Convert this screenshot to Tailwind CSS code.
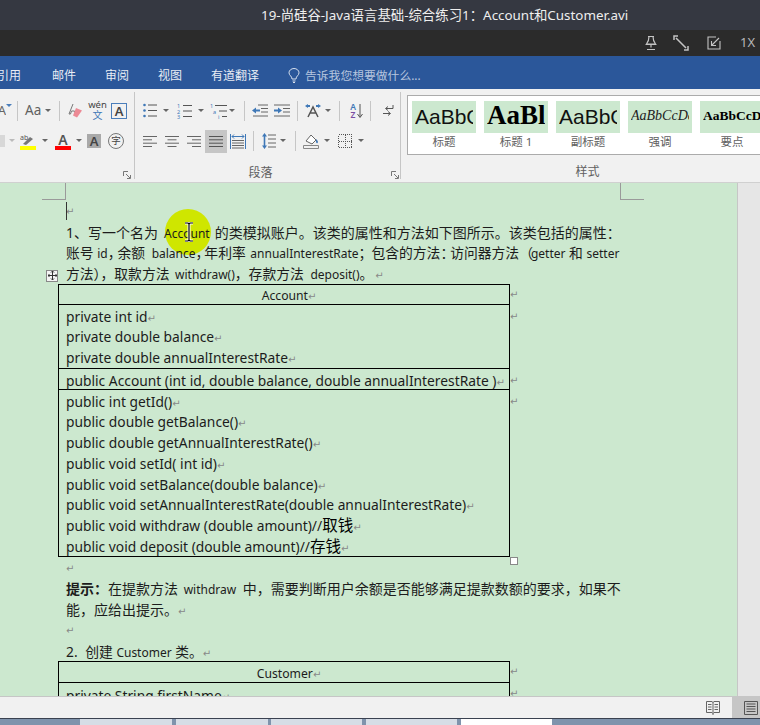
<!DOCTYPE html>
<html lang="zh-CN">
<head>
    <meta charset="UTF-8">
    <title>19-尚硅谷-Java语言基础-综合练习1：Account和Customer.avi</title>
    <script src="https://cdn.jsdelivr.net/npm/@tailwindcss/browser@4"></script>
</head>
<body class="bg-[#cce8cf]">
<div class="w-[760px] h-[725px] overflow-hidden flex flex-col font-['Noto_Sans','Noto_Sans_CJK_SC',sans-serif]">

    <!-- Player title -->
    <div class="h-[30px] shrink-0 bg-[#353841] text-[#eeeeee] text-[13.4px] leading-[30px] pl-[261px] whitespace-nowrap">19-尚硅谷-Java语言基础-综合练习1：Account和Customer.avi</div>

    <!-- Player toolbar -->
    <div class="h-[26px] shrink-0 bg-[#2b2b2b] flex items-center text-[#b8b8b8]">
        <svg class="ml-[644px] w-[14px] h-[16px]" viewBox="0 0 14 16" fill="none" stroke="#c4c4c4" stroke-width="1.2"><path d="M4 1.500h6M5 1.500c0 3-.5 5-2.500 7.500h9C9.500 6.500 9 4.500 9 1.500M1.500 9.500h11M7 9.500v3M3 14.500h8"/></svg>
        <svg class="ml-[15px] w-[16px] h-[16px]" viewBox="0 0 16 16" fill="none" stroke="#c4c4c4" stroke-width="1.500"><path d="M3 3l10 10M1 5V1h4M15 11v4h-4"/></svg>
        <svg class="ml-[18px] w-[14px] h-[14px]" viewBox="0 0 14 14" fill="none" stroke="#c4c4c4" stroke-width="1.100"><path d="M9 1H1v12h12V5M12 2L4.500 9.500M4.500 5v4.500H9"/></svg>
        <span class="ml-[19px] text-[13px]">1X</span>
    </div>

    <!-- Word tabs -->
    <div class="h-[33px] shrink-0 bg-[#2b579a] flex items-center pt-[6px] text-[12px] text-[#e8edf5] whitespace-nowrap">
        <span class="ml-[-3px] w-[25px]">引用</span>
        <span class="ml-[30px] w-[24px]">邮件</span>
        <span class="ml-[29px] w-[24px]">审阅</span>
        <span class="ml-[29px] w-[24px]">视图</span>
        <span class="ml-[29px] w-[48px]">有道翻译</span>
        <svg class="ml-[29px] w-[12px] h-[15px]" viewBox="0 0 12 15" fill="none" stroke="#d7e0ee" stroke-width="1"><path d="M4 11C4 8 1 7.500 1 4.800a5 4.300 0 0 1 10 0C11 7.500 8 8 8 11zM4.500 13h3M5 14.500h2"/></svg>
        <span class="ml-[5px] text-[#b6c6df] text-[11.800px]">告诉我您想要做什么...</span>
    </div>

    <!-- Ribbon -->
    <div class="h-[94px] shrink-0 bg-[#f1f1f1] flex border-b border-[#d0d0d0] text-[#606060]">

        <!-- Font group -->
        <div class="relative w-[135px] shrink-0 border-r border-[#c6c6c6] my-[3px]">
            <div class="h-[32px] flex items-center pt-[5px]">
                <span class="w-[6px] flex justify-end overflow-hidden text-[13px] text-[#666] leading-none">A</span>
                <svg class="w-[6px] h-[4px] mb-[10px]" viewBox="0 0 6 4"><path d="M0 0h6L3 3z" fill="#4a7ebb"/></svg>
                <span class="w-px h-[20px] bg-[#c6c6c6] ml-[5px]"></span>
                <span class="ml-[7px] w-[16px] text-[13.500px] leading-none">Aa</span>
                <svg class="ml-[4px] w-[6px] h-[4px]" viewBox="0 0 6 4"><path d="M0 0h6L3 3z" fill="#666"/></svg>
                <span class="w-px h-[20px] bg-[#c6c6c6] ml-[8px]"></span>
                <svg class="ml-[8px] w-[16px] h-[16px]" viewBox="0 0 16 16"><path d="M5 1L1 11h1.500l1-3h3l1 3" fill="none" stroke="#777"/><path d="M8 5l6 2.500-5 7-4-2z" fill="#ec8a95"/></svg>
                <div class="ml-[5px] w-[17px] flex flex-col items-center leading-none">
                    <span class="text-[9.500px] leading-[10px] text-[#444]">wén</span>
                    <span class="text-[10px] leading-[11px] text-[#3f78b7]">文</span>
                </div>
                <span class="ml-[5px] w-[16px] h-[16px] border border-[#4a7ebb] text-[13px] leading-[14px] text-center text-[#444] font-semibold">A</span>
            </div>
            <div class="h-[32px] flex items-center pt-[2px]">
                <span class="w-[5px] h-[12px] bg-[#d8d8d8]"></span>
                <svg class="ml-[4px] w-[6px] h-[4px]" viewBox="0 0 6 4"><path d="M0 0h6L3 3z" fill="#bbb"/></svg>
                <svg class="ml-[5px] w-[17px] h-[17px]" viewBox="0 0 17 17"><path d="M3 11L10 4l3 2-7 6" fill="#777"/><text x="0" y="7" font-size="7" fill="#555" font-family="Noto Sans">ab</text><rect y="13" width="16" height="4" fill="#ffff00"/></svg>
                <svg class="ml-[5px] w-[6px] h-[4px]" viewBox="0 0 6 4"><path d="M0 0h6L3 3z" fill="#666"/></svg>
                <div class="ml-[7px] w-[16px] h-[17px] flex flex-col items-center">
                    <span class="text-[14px] leading-[13px] text-[#555] font-semibold">A</span>
                    <span class="w-[16px] h-[4px] bg-[#ff0000]"></span>
                </div>
                <svg class="ml-[5px] w-[6px] h-[4px]" viewBox="0 0 6 4"><path d="M0 0h6L3 3z" fill="#666"/></svg>
                <span class="ml-[5px] w-[14px] h-[14px] bg-[#a9a9a9] text-[13px] leading-[14px] text-center text-[#444] font-semibold">A</span>
                <span class="ml-[7px] w-[16px] h-[16px] rounded-full border border-[#777] text-[9.500px] leading-[14px] text-center text-[#444]">字</span>
            </div>
            <svg class="absolute left-[123px] top-[79px] w-[8px] h-[8px]" viewBox="0 0 8 8" fill="none" stroke="#777"><path d="M.5 5V.5H5M3 3l4 4M7.500 4v3.500H4"/></svg>
        </div>

        <!-- Paragraph group -->
        <div class="relative w-[266px] shrink-0 border-r border-[#c6c6c6] my-[3px] pl-[8px]">
            <div class="h-[32px] flex items-center pt-[5px]">
                <svg class="w-[14px] h-[15px]" viewBox="0 0 14 15"><circle cx="1.500" cy="2" r="1.300" fill="#3f78b7"/><circle cx="1.500" cy="7.500" r="1.300" fill="#3f78b7"/><circle cx="1.500" cy="13" r="1.300" fill="#3f78b7"/><path d="M5 2h9M5 7.500h9M5 13h9" stroke="#555"/></svg>
                <svg class="ml-[6px] w-[6px] h-[4px]" viewBox="0 0 6 4"><path d="M0 0h6L3 3z" fill="#666"/></svg>
                <svg class="ml-[8px] w-[15px] h-[16px]" viewBox="0 0 15 16"><text x="0" y="5" font-size="5.500" fill="#3f78b7" font-family="Noto Sans">1</text><text x="0" y="10.500" font-size="5.500" fill="#3f78b7" font-family="Noto Sans">2</text><text x="0" y="16" font-size="5.500" fill="#3f78b7" font-family="Noto Sans">3</text><path d="M6 2.500h9M6 8h9M6 13.500h9" stroke="#555"/></svg>
                <svg class="ml-[6px] w-[6px] h-[4px]" viewBox="0 0 6 4"><path d="M0 0h6L3 3z" fill="#666"/></svg>
                <svg class="ml-[6px] w-[17px] h-[16px]" viewBox="0 0 17 16"><text x="0" y="5" font-size="5.500" fill="#3f78b7" font-family="Noto Sans">1</text><text x="3" y="10.500" font-size="5.500" fill="#3f78b7" font-family="Noto Sans">a</text><text x="8" y="16" font-size="5.500" fill="#3f78b7" font-family="Noto Sans">i</text><path d="M5 2.500h12M9 8h8M12 13.500h5" stroke="#555"/></svg>
                <svg class="ml-[2px] w-[6px] h-[4px]" viewBox="0 0 6 4"><path d="M0 0h6L3 3z" fill="#666"/></svg>
                <span class="w-px h-[20px] bg-[#c6c6c6] ml-[9px]"></span>
                <svg class="ml-[7px] w-[16px] h-[13px]" viewBox="0 0 16 13"><path d="M6 1h10M9 4.500h7M9 8h7M1 12h15" stroke="#666"/><path d="M0 6.500l4-3v2h4v2H4v2z" fill="#3f78b7"/></svg>
                <svg class="ml-[6px] w-[16px] h-[13px]" viewBox="0 0 16 13"><path d="M0 1h16M9 4.500h7M9 8h7M0 12h16" stroke="#666"/><path d="M8 6.500l-4-3v2H0v2h4v2z" fill="#3f78b7"/></svg>
                <span class="w-px h-[20px] bg-[#c6c6c6] ml-[7px]"></span>
                <svg class="ml-[7px] w-[16px] h-[15px]" viewBox="0 0 16 15"><path d="M3 14L8 4l5 10M5 10h6" fill="none" stroke="#555" stroke-width="1.500"/><path d="M0 3l3-2v1h2v2H3v1zM16 3l-3-2v1h-2v2h2v1z" fill="#3f78b7"/></svg>
                <svg class="ml-[4px] w-[6px] h-[4px]" viewBox="0 0 6 4"><path d="M0 0h6L3 3z" fill="#666"/></svg>
                <span class="w-px h-[20px] bg-[#c6c6c6] ml-[8px]"></span>
                <div class="ml-[9px] w-[8px] flex flex-col text-[8.500px] leading-[8px] font-semibold items-center"><span class="text-[#3f78b7]">A</span><span class="text-[#7a4ea3]">Z</span></div>
                <svg class="w-[6px] h-[16px]" viewBox="0 0 6 16" fill="none" stroke="#555"><path d="M3 1v13M.5 11L3 14.500 5.500 11"/></svg>
                <span class="w-px h-[20px] bg-[#c6c6c6] ml-[7px]"></span>
                <svg class="ml-[11px] w-[12px] h-[14px]" viewBox="0 0 12 14" fill="none" stroke="#555"><path d="M11 1v3.500H4M6 2.500L3.500 4.500 6 6.500M1 9.500h7M6 7.500l2.500 2L6 11.500"/></svg>
            </div>
            <div class="h-[32px] flex items-center pt-[2px]">
                <svg class="w-[14px] h-[11px]" viewBox="0 0 14 11" stroke="#666"><path d="M0 .5h14M0 3.800h9M0 7.200h14M0 10.500h9"/></svg>
                <svg class="ml-[8px] w-[14px] h-[11px]" viewBox="0 0 14 11" stroke="#666"><path d="M0 .5h14M2.500 3.800h9M0 7.200h14M2.500 10.500h9"/></svg>
                <svg class="ml-[8px] w-[14px] h-[11px]" viewBox="0 0 14 11" stroke="#666"><path d="M0 .5h14M5 3.800h9M0 7.200h14M5 10.500h9"/></svg>
                <div class="ml-[4px] w-[22px] h-[23px] bg-[#c6c6c6] flex items-center justify-center">
                    <svg class="w-[14px] h-[11px]" viewBox="0 0 14 11" stroke="#555"><path d="M0 .5h14M0 3.800h14M0 7.200h14M0 10.500h14"/></svg>
                </div>
                <svg class="ml-[3px] w-[16px] h-[15px]" viewBox="0 0 16 15"><path d="M2 6.500h12M2 9h12M2 11.500h12M2 14h12" stroke="#666"/><path d="M.5 0v15M15.500 0v15" stroke="#3f78b7"/><path d="M2 2.500h12M2 2.500l2-2M2 2.500l2 2M14 2.500l-2-2M14 2.500l-2 2" stroke="#3f78b7" fill="none"/></svg>
                <span class="w-px h-[20px] bg-[#c6c6c6] ml-[7px]"></span>
                <svg class="ml-[8px] w-[14px] h-[16px]" viewBox="0 0 14 16"><path d="M6 2h8M6 6h8M6 10h8M6 14h8" stroke="#666"/><path d="M2.500 0L5 3.500H3.300v9H5L2.500 16 0 12.500h1.700v-9H0z" fill="#3f78b7"/></svg>
                <svg class="ml-[4px] w-[6px] h-[4px]" viewBox="0 0 6 4"><path d="M0 0h6L3 3z" fill="#666"/></svg>
                <span class="w-px h-[20px] bg-[#c6c6c6] ml-[9px]"></span>
                <svg class="ml-[7px] w-[16px] h-[16px]" viewBox="0 0 16 16" fill="none"><path d="M3 8l5-6 5 5-4 4z" fill="#fff" stroke="#666"/><path d="M13 6c2 2 2.500 3 1.500 4s-2-1-1.500-4z" fill="#3f78b7"/><path d="M.5 12.500h15v3H.5z" stroke="#888"/></svg>
                <svg class="ml-[5px] w-[6px] h-[4px]" viewBox="0 0 6 4"><path d="M0 0h6L3 3z" fill="#666"/></svg>
                <svg class="ml-[8px] w-[14px] h-[14px]" viewBox="0 0 14 14" fill="none" stroke="#555" stroke-dasharray="1 1" shape-rendering="crispEdges"><path d="M.5.500h13v13H.5zM7 .5v13M.5 7h13"/></svg>
                <svg class="ml-[6px] w-[6px] h-[4px]" viewBox="0 0 6 4"><path d="M0 0h6L3 3z" fill="#666"/></svg>
            </div>
            <div class="text-center text-[12px] leading-[16px] mt-[9px] pr-[22px]">段落</div>
            <svg class="absolute left-[256px] top-[79px] w-[8px] h-[8px]" viewBox="0 0 8 8" fill="none" stroke="#777"><path d="M.5 5V.5H5M3 3l4 4M7.500 4v3.500H4"/></svg>
        </div>

        <!-- Styles group -->
        <div class="flex-1 min-w-0 overflow-hidden pl-[6px] pt-[6px]">
            <div class="w-[400px] h-[60px] bg-white border border-[#ababab] flex gap-[8px] pl-[4px] pt-[5px]">
                <div class="w-[64px] shrink-0">
                    <div class="h-[32px] bg-[#cce8cf] px-[3px]"><div class="overflow-hidden whitespace-nowrap text-[#111] text-[21px] leading-[31px] font-['Liberation_Sans']">AaBbC</div></div>
                    <div class="text-center text-[11.500px] leading-[17px]">标题</div>
                </div>
                <div class="w-[64px] shrink-0">
                    <div class="h-[32px] bg-[#cce8cf] px-[3px]"><div class="overflow-hidden whitespace-nowrap text-black text-[27px] leading-[29px] font-bold font-['Liberation_Serif']">AaBl</div></div>
                    <div class="text-center text-[11.500px] leading-[17px]">标题 1</div>
                </div>
                <div class="w-[64px] shrink-0">
                    <div class="h-[32px] bg-[#cce8cf] px-[3px]"><div class="overflow-hidden whitespace-nowrap text-[#111] text-[21px] leading-[31px] font-['Liberation_Sans']">AaBbC</div></div>
                    <div class="text-center text-[11.500px] leading-[17px]">副标题</div>
                </div>
                <div class="w-[64px] shrink-0">
                    <div class="h-[32px] bg-[#cce8cf] px-[3px]"><div class="overflow-hidden whitespace-nowrap text-[#222] text-[14px] leading-[30px] italic font-['Liberation_Serif']">AaBbCcDd</div></div>
                    <div class="text-center text-[11.500px] leading-[17px]">强调</div>
                </div>
                <div class="w-[64px] shrink-0">
                    <div class="h-[32px] bg-[#cce8cf] pl-[3px]"><div class="overflow-hidden whitespace-nowrap text-black text-[13.500px] leading-[30px] font-bold font-['Liberation_Serif']">AaBbCcDd</div></div>
                    <div class="text-center text-[11.500px] leading-[17px]">要点</div>
                </div>
            </div>
            <div class="text-center text-[12px] leading-[16px] mt-[9px] pl-[8px]">样式</div>
        </div>
    </div>

    <!-- Document -->
    <div class="relative h-[513px] shrink-0 overflow-hidden bg-[#cce8cf] border-r-[22px] border-[#e6e6e6]">
        <!-- page corner marks -->
        <div class="absolute left-[42px] top-0 w-[24px] h-[17px] border-r border-b border-[#9a9a9a]"></div>
        <div class="absolute left-[620px] top-0 w-[24px] h-[17px] border-l border-b border-[#9a9a9a]"></div>
        <div class="absolute left-[737px] w-px top-0 bottom-0 bg-[#c6c6c6]"></div>
        <!-- cursor highlight -->
        <div class="absolute left-[165px] top-[26px] w-[46px] h-[46px] rounded-full bg-[#cfe600]"></div>

        <div class="relative pl-[66px] pt-[18px] w-[738px] text-[#1c1c1c] text-[12px] leading-[22.500px] whitespace-nowrap [&>div]:h-[20.700px]">
            <div class="relative leading-[20.700px]">
                <span class="absolute left-0 top-[1px] w-px h-[18px] bg-[#333]"></span>
                <span class="text-[#888] text-[10px] leading-none font-['DejaVu_Sans']">↵</span>
            </div>
            <div class="text-[14px]">1、写一个名为<span class="ml-[6px] text-[12px]">Account</span><span class="ml-[5px]">的类模拟账户。该类的属性和方法如下图所示。该类包括的属性：</span></div>
            <div class="text-[13.800px]">账号 <span class="text-[12px]">id</span><span class="mr-[-4px]">，</span>余额 <span class="ml-[3px] text-[12px]">balance</span><span class="mr-[-5px]">，</span>年利率 <span class="ml-[1px] text-[12px]">annualInterestRate</span><span class="mr-[-1px]">；</span>包含的方法<span class="mr-[-4px]">：</span>访问器方法<span class="mr-[-2px]">（</span><span class="text-[12px]">getter</span> 和 <span class="text-[12px]">setter</span></div>
            <div class="text-[13.800px]">方法），取款方法 <span class="ml-[2px] text-[12px]">withdraw()</span>，存款方法 <span class="ml-[3px] text-[12px]">deposit()</span>。<span class="ml-[2px] text-[#888] text-[10px] leading-none font-['DejaVu_Sans']">↵</span></div>

            <!-- Account table -->
            <div class="relative -ml-[8px] !h-[273px] w-[452px] border border-black text-[13.800px] leading-[20.700px]">
                <div class="h-[20px] leading-[21px] text-center text-[12.200px] pl-[10px] border-b border-black">Account<span class="text-[#888] text-[10px] leading-none font-['DejaVu_Sans']">↵</span></div>
                <div class="h-[64px] pl-[7px] pt-[2px] border-b border-black [&>div]:h-[20.700px]">
                    <div>private int id<span class="text-[#888] text-[10px] leading-none font-['DejaVu_Sans']">↵</span></div>
                    <div>private double balance<span class="text-[#888] text-[10px] leading-none font-['DejaVu_Sans']">↵</span></div>
                    <div>private double annualInterestRate<span class="text-[#888] text-[10px] leading-none font-['DejaVu_Sans']">↵</span></div>
                </div>
                <div class="h-[21px] leading-[23px] pl-[7px] border-b border-black">public Account (int id, double balance, double annualInterestRate )<span class="text-[#888] text-[10px] leading-none font-['DejaVu_Sans']">↵</span></div>
                <div class="h-[166px] pl-[7px] pt-[2px] [&>div]:h-[20.700px]">
                    <div>public int getId()<span class="text-[#888] text-[10px] leading-none font-['DejaVu_Sans']">↵</span></div>
                    <div>public double getBalance()<span class="text-[#888] text-[10px] leading-none font-['DejaVu_Sans']">↵</span></div>
                    <div>public double getAnnualInterestRate()<span class="text-[#888] text-[10px] leading-none font-['DejaVu_Sans']">↵</span></div>
                    <div>public void setId( int id)<span class="text-[#888] text-[10px] leading-none font-['DejaVu_Sans']">↵</span></div>
                    <div>public void setBalance(double balance)<span class="text-[#888] text-[10px] leading-none font-['DejaVu_Sans']">↵</span></div>
                    <div>public void setAnnualInterestRate(double annualInterestRate)<span class="text-[#888] text-[10px] leading-none font-['DejaVu_Sans']">↵</span></div>
                    <div>public void withdraw (double amount)//<span class="text-[15.500px] text-black leading-none">取钱</span><span class="text-[#888] text-[10px] leading-none font-['DejaVu_Sans']">↵</span></div>
                    <div>public void deposit (double amount)//<span class="text-[15.500px] text-black leading-none">存钱</span><span class="text-[#888] text-[10px] leading-none font-['DejaVu_Sans']">↵</span></div>
                </div>
                <!-- row end marks -->
                <span class="absolute left-[451px] top-0 text-[#888] text-[10px] leading-[20px] font-['DejaVu_Sans']">↵</span>
                <span class="absolute left-[451px] top-[22px] text-[#888] text-[10px] leading-[20px] font-['DejaVu_Sans']">↵</span>
                <span class="absolute left-[451px] top-[86px] text-[#888] text-[10px] leading-[20px] font-['DejaVu_Sans']">↵</span>
                <span class="absolute left-[451px] top-[107px] text-[#888] text-[10px] leading-[20px] font-['DejaVu_Sans']">↵</span>
                <!-- table handles -->
                <div class="absolute -left-[13px] -top-[15px] w-[12px] h-[12px] bg-[#f4f4f4] border border-[#888] flex items-center justify-center">
                    <svg class="w-[9px] h-[9px]" viewBox="0 0 9 9" fill="none" stroke="#333"><path d="M4.500 0v9M0 4.500h9M3 1.500L4.500 0 6 1.500M3 7.500L4.500 9 6 7.500M1.500 3L0 4.500 1.500 6M7.500 3L9 4.500 7.500 6"/></svg>
                </div>
                <div class="absolute left-[451px] top-[272px] w-[8px] h-[8px] bg-white border border-[#888]"></div>
            </div>

            <div class="mt-[1px] text-[#888] text-[10px] font-['DejaVu_Sans']">↵</div>
            <div class="text-[14px]"><span class="font-bold">提示：</span>在提款方法 <span class="ml-[2px] text-[12px]">withdraw</span> <span class="ml-[3px]">中</span>，需要判断用户余额是否能够满足提款数额的要求，如果不</div>
            <div class="text-[14px]">能，应给出提示。<span class="text-[#888] text-[10px] leading-none font-['DejaVu_Sans']">↵</span></div>
            <div class="text-[#888] text-[10px] font-['DejaVu_Sans']">↵</div>
            <div class="text-[13.800px]">2. <span class="ml-[4px]">创建</span> <span class="text-[12px]">Customer</span> 类。<span class="text-[#888] text-[10px] leading-none font-['DejaVu_Sans']">↵</span></div>

            <!-- Customer table -->
            <div class="relative -ml-[8px] !h-[60px] w-[452px] border border-black text-[13.800px]">
                <div class="h-[21px] leading-[23px] text-center text-[12.200px] pl-[10px] border-b border-black">Customer<span class="text-[#888] text-[10px] leading-none font-['DejaVu_Sans']">↵</span></div>
                <div class="pl-[7px] pt-[2px] h-[20px]">private String firstName<span class="text-[#888] text-[10px] leading-none font-['DejaVu_Sans']">↵</span></div>
                <span class="absolute left-[451px] top-0 text-[#888] text-[10px] leading-[20px] font-['DejaVu_Sans']">↵</span>
                <span class="absolute left-[451px] top-[22px] text-[#888] text-[10px] leading-[20px] font-['DejaVu_Sans']">↵</span>
            </div>
        </div>

        <!-- mouse cursor -->
        <svg class="absolute left-[184px] top-[39px] w-[10px] h-[20px]" viewBox="0 0 10 20" fill="none"><path d="M1 1h3l1 1 1-1h3M5 2v16M1 19h3l1-1 1 1h3" stroke="#fff" stroke-width="3"/><path d="M1 1h3l1 1 1-1h3M5 2v16M1 19h3l1-1 1 1h3" stroke="#000" stroke-width="1.200"/></svg>
    </div>

    <!-- Status bar -->
    <div class="h-[22px] shrink-0 bg-[#f1f1f1] border-t border-[#c6c6c6] flex items-center">
        <svg class="ml-[706px] w-[14px] h-[15px]" viewBox="0 0 14 15" fill="none" stroke="#666"><path d="M.5 1.500h5.500L7 2.500l1-1h5.500v11H8L7 13.500l-1-1H.5zM7 1.500V15M2 4.500h3.500M2 7h3.500M2 9.500h3.500M8.500 4.500H12M8.500 7H12M8.500 9.500H12"/></svg>
        <div class="ml-[12px] w-[28px] h-[21px] bg-[#c6c6c6] flex items-center pl-[12px]">
            <svg class="w-[14px] h-[14px]" viewBox="0 0 14 14" fill="none" stroke="#555"><path d="M.5.500h13v13H.5zM2.500 3h9M2.500 5.500h9M2.500 8h9M2.500 10.500h9"/></svg>
        </div>
    </div>

    <!-- Window tabs at the bottom edge -->
    <div class="flex-1 bg-[#7f93ac] border-t border-[#3a4150] flex">
        <div class="ml-[80px] w-[92px] bg-[#d6dde6]"></div>
        <div class="ml-[4px] w-[92px] bg-[#d6dde6]"></div>
        <div class="ml-[3px] w-[91px] bg-[#d6dde6]"></div>
        <div class="ml-[4px] w-[91px] bg-[#d6dde6]"></div>
        <div class="ml-[4px] w-[91px] bg-white"></div>
    </div>
</div>
</body>
</html>
